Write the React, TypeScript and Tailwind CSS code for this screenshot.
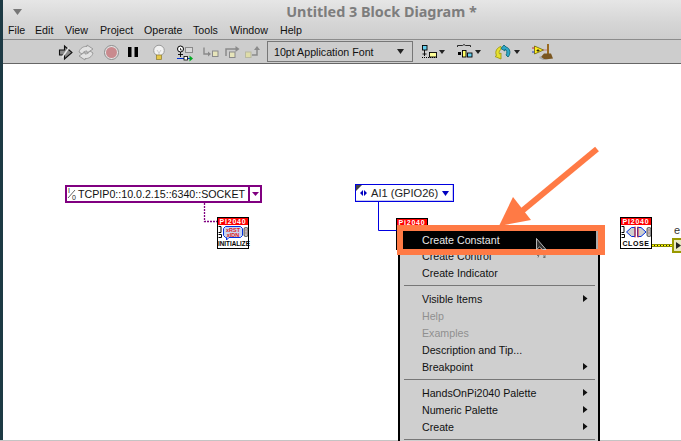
// App.tsx - LabVIEW block diagram window with a context menu and a callout arrow
import React from 'react';

const MENU_BAR = [
  { label: 'File', cls: 'w-[27px]' },
  { label: 'Edit', cls: 'w-[30px]' },
  { label: 'View', cls: 'w-[35px]' },
  { label: 'Project', cls: 'w-[44px]' },
  { label: 'Operate', cls: 'w-[49px]' },
  { label: 'Tools', cls: 'w-[37px]' },
  { label: 'Window', cls: 'w-[50px]' },
  { label: 'Help', cls: 'w-[30px]' },
];

type MenuRow = { label: string; sub?: boolean; off?: boolean } | 'sep';

const MENU: MenuRow[] = [
  { label: 'Create Control' },
  { label: 'Create Indicator' },
  'sep',
  { label: 'Visible Items', sub: true },
  { label: 'Help', off: true },
  { label: 'Examples', off: true },
  { label: 'Description and Tip...' },
  { label: 'Breakpoint', sub: true },
  'sep',
  { label: 'HandsOnPi2040 Palette', sub: true },
  { label: 'Numeric Palette', sub: true },
  { label: 'Create', sub: true },
  'sep',
];

// toolbar drawings use page coordinates through their viewBox
function ToolbarLeft() {
  return (
    <svg width="264" height="23" viewBox="3 40 264 23" className="shrink-0">
      {/* run */}
      <path d="M59.500 50h5v-4l7.500 6.500-7.500 6.500v-4h-5z" fill="#8a8a8a" stroke="#111" strokeWidth="1.100" />
      <path d="M62 57.500L69 47.500" stroke="#e8e8e8" strokeWidth="1.500" />
      {/* run continuously */}
      <path d="M79 52c1-4 5-6 8-5.500v-1.500l6 4-6 4v-2c-2 0-4 1-5 3z" fill="#e2e2e2" stroke="#9a9a9a" />
      <path d="M93 53c-1 4-5 6-8 5.500v1.500l-6-4 6-4v2c2 0 4-1 5-3z" fill="#e2e2e2" stroke="#9a9a9a" />
      {/* abort */}
      <circle cx="111.500" cy="52.500" r="7" fill="#e6e6e6" stroke="#8c8c8c" />
      <circle cx="111.500" cy="52.500" r="5.500" fill="#c98a8e" />
      {/* pause */}
      <rect x="128" y="47" width="3.500" height="10" fill="#000" />
      <rect x="134.500" y="47" width="3.500" height="10" fill="#000" />
      {/* highlight bulb */}
      <circle cx="159" cy="50.500" r="5.300" fill="#f2f2f2" stroke="#9a9a9a" />
      <path d="M157 50l2 3 2-3M159 53v2" fill="none" stroke="#bbb" strokeWidth=".7" />
      <rect x="156.500" y="55" width="5" height="4.500" fill="#e6c84a" stroke="#8a7a30" strokeWidth=".7" />
      {/* retain wire values */}
      <rect x="185.500" y="47.500" width="7" height="5" fill="#d8d8d8" stroke="#8a8a8a" />
      <circle cx="180.500" cy="49" r="3" fill="#fff" stroke="#000" />
      <path d="M180.500 48v2h1.500" fill="none" stroke="#000" strokeWidth=".7" />
      <path d="M180.500 52v5M178 54.500h5" stroke="#000" strokeWidth=".9" />
      <path d="M177 58.500h13" stroke="#0030d0" />
      <rect x="184" y="56.500" width="3.500" height="3.500" fill="#fff" stroke="#000" strokeWidth=".8" />
      <path d="M189.500 55.500l3.500 3-3.500 3z" fill="#00a820" />
      {/* step into */}
      <path d="M204 47.500v6.500h5" fill="none" stroke="#8a8a8a" strokeWidth="1.400" />
      <path d="M208 51.500l3 2.500-3 2.500z" fill="#8a8a8a" />
      <rect x="212.500" y="51" width="5.500" height="5.500" fill="#e6e4ba" stroke="#8a8a8a" />
      {/* step over */}
      <path d="M226 56v-7h10" fill="none" stroke="#8a8a8a" strokeWidth="1.500" />
      <path d="M235.500 46l4 3-4 3z" fill="#8a8a8a" />
      <rect x="229.500" y="52" width="5.500" height="5.500" fill="#e6e4ba" stroke="#8a8a8a" />
      {/* step out */}
      <rect x="245.500" y="52" width="5.500" height="5.500" fill="#dedca8" stroke="#b8b8a0" />
      <path d="M252 55h5v-6" fill="none" stroke="#8a8a8a" strokeWidth="1.500" />
      <path d="M254 50l3-4 3 4z" fill="#8a8a8a" />
    </svg>
  );
}

function ToolbarRight() {
  return (
    <svg width="150" height="23" viewBox="413 40 150 23" className="shrink-0">
      {/* align objects */}
      <rect x="422.500" y="45.500" width="4.500" height="4.500" fill="#66d0f0" stroke="#000" strokeWidth=".9" />
      <path d="M424.500 50v6M422.500 54h4" stroke="#000" strokeWidth=".9" />
      <path d="M422 57.500h15" stroke="#000" strokeDasharray="1 1" />
      <rect x="429.500" y="52.500" width="7" height="4.500" fill="#ffff99" stroke="#000" strokeWidth=".9" />
      <path d="M439 50h6l-3 4z" fill="#222" />
      {/* distribute objects */}
      <path d="M457.500 47v-1.500h5l1.500-1 1.500 1h5v1.500" fill="none" stroke="#000" strokeWidth=".8" />
      <rect x="458" y="52" width="3" height="3" fill="#000" />
      <rect x="462.500" y="50.500" width="3.500" height="6.500" fill="#ffff66" stroke="#000" strokeWidth=".9" />
      <rect x="467.500" y="53" width="4.500" height="4" fill="#66d0f0" stroke="#000" strokeWidth=".9" />
      <path d="M475 50h6l-3 4z" fill="#222" />
      {/* reorder */}
      <path d="M501 46.500c-4 1-6.500 5-4.500 9l-1.500 1 6 2.500 0-6-1.500 1c-1-2 0-4 2-5z" fill="#e6e030" stroke="#a09a10" strokeWidth=".9" />
      <path d="M504 45l-3 3.500 4 2.500v-2c2 1 2.500 4 1 6l2 2c3-3 2.500-9-2-10z" fill="#30a8c8" stroke="#106878" strokeWidth=".9" />
      <path d="M514 50h6l-3 4z" fill="#222" />
      {/* clean up diagram */}
      <path d="M534.500 46l9 4-9 4z" fill="#ffee20" stroke="#6a6000" strokeWidth=".8" />
      <path d="M538 49v3M536.500 50.500h3" stroke="#000" strokeWidth=".7" />
      <path d="M532 48h2.500" stroke="#c03030" />
      <path d="M532 52h2.500" stroke="#2040c0" />
      <path d="M543.500 50h4" stroke="#c03030" strokeDasharray="1 1" />
      <rect x="547" y="44" width="2" height="10" fill="#9a6a20" />
      <path d="M541 57l3-3.500h7l2 5-8 1-3-1z" fill="#7a5620" />
      <path d="M540 56l4 3 4 1-5 0-4-2z" fill="#aaa" />
    </svg>
  );
}

function ViIcon({ tag, label, labelCls, kind }: { tag: string; label?: string; labelCls?: string; kind: 'init' | 'close' | 'none' }) {
  return (
    <div className="relative w-[32px] h-[32px] bg-white border border-black flex flex-col">
      <div className="h-[7px] bg-[#ff0000] text-white text-[7px] leading-[7px] text-center font-bold tracking-[0.8px] [font-family:'Liberation_Sans',sans-serif]">
        {tag}
      </div>
      <div className="flex-1 relative">
        <svg width="30" height="15" viewBox="0 0 30 15" className="absolute left-0 top-0">
          {kind !== 'none' && <path d="M.500 1.500h2.500v6H.500M.500 9.500h3v3H.500" fill="none" stroke="#000" />}
          {kind === 'init' && (
            <>
              <path d="M7.500 1.500h15l2 2v7l-2 2H11l-2.500 2.500v-2.500h-1l-2-2v-7z" fill="#c8d4f0" stroke="#0030e0" />
              <text x="15" y="6.500" textAnchor="middle" fontSize="5.500" fontWeight="700" fill="#e02020">xRST</text>
              <text x="15" y="11.500" textAnchor="middle" fontSize="5.500" fontWeight="700" fill="#e02020">xIDN</text>
            </>
          )}
          {kind === 'close' && (
            <>
              <path d="M5.500 7l5-4.500h3.500v9h-3.500zM25 7l-5-4.500h-3.500v9h3.500z" fill="#cfcfcf" stroke="#0030e0" />
              <path d="M14 1.500v11M17 1.500v11" stroke="#e02020" />
            </>
          )}
          {kind !== 'none' && (
            <>
              <rect x="26" y="2.500" width="4" height="9" rx="1.500" fill="#bcbcbc" stroke="#333" strokeWidth=".8" />
              <path d="M27.500 5h1M27.500 8h1" stroke="#c04040" strokeWidth=".8" />
            </>
          )}
        </svg>
      </div>
      {label && <div className={labelCls}>{label}</div>}
    </div>
  );
}

function ContextMenu() {
  return (
    <div className="absolute left-[398px] top-[231px] w-[202px] h-[215px] bg-[#cfcfcf] border-x-[2.500px] border-black">
      <div className="h-[18px] flex items-center pl-[22px] bg-black text-[#e8e8e8] text-[10.67px] border-r-[2px] border-r-[#aaa]">Create Constant</div>
      <div className="flex flex-col mt-[-2px]">
        {MENU.map((row, i) =>
          row === 'sep' ? (
            <div key={i} className="h-[1px] mx-[3.500px] my-[4px] bg-[#777]" />
          ) : (
            <div
              key={i}
              className={`h-[17px] flex items-center justify-between pl-[22px] pr-[10px] text-[10.67px] ${row.off ? 'text-[#8f8f8f]' : 'text-[#111]'}`}
            >
              <span>{row.label}</span>
              {row.sub && (
                <svg width="5" height="7" viewBox="0 0 5 7">
                  <path d="M0 0l4.500 3.500L0 7z" fill="#111" />
                </svg>
              )}
            </div>
          ),
        )}
      </div>
    </div>
  );
}

export default function App() {
  return (
    <div className="relative w-[681px] h-[441px] overflow-hidden bg-white flex [font-family:'Liberation_Sans',sans-serif]">
      <div className="w-[3px] h-full bg-[#1d3a44] shrink-0" />
      <div className="flex-1 flex flex-col min-w-0">
        {/* title bar */}
        <div className="h-[22px] pt-[2px] bg-gradient-to-b from-[#e6e6e6] to-[#d6d6d6] relative flex items-center justify-center pl-[79px]">
          <svg width="9" height="6" viewBox="0 0 9 6" className="absolute left-[10px] top-[9px]">
            <path d="M0 0h9L4.500 6z" fill="#777" />
          </svg>
          <span className="text-[14.400px] font-bold text-[#7d7d7d] [font-family:'Noto_Sans',sans-serif]">Untitled 3 Block Diagram *</span>
        </div>
        {/* menu bar */}
        <div className="h-[17px] pb-[2px] bg-gradient-to-b from-[#d6d6d6] to-[#cdcdcd] flex items-center pl-[5px] text-[10.67px] text-[#111]">
          {MENU_BAR.map(m => (
            <span key={m.label} className={m.cls}>{m.label}</span>
          ))}
        </div>
        {/* toolbar */}
        <div className="h-[25px] bg-[#cdcdcd] border-y border-t-[#8c8c8c] border-b-[#666] flex items-center">
          <ToolbarLeft />
          <div className="flex items-center justify-between w-[146px] h-[21px] pl-[6px] pr-[8px] border border-[#777] text-[10.67px] text-[#111] shrink-0">
            <span>10pt Application Font</span>
            <svg width="7" height="5" viewBox="0 0 7 5"><path d="M0 0h7L3.500 5z" fill="#222" /></svg>
          </div>
          <ToolbarRight />
        </div>
        <div className="flex-1 bg-white" />
      </div>
      <div className="absolute left-0 right-0 bottom-0 h-px bg-[#c4c4c4]" />

      {/* VISA resource control */}
      <div className="absolute left-[65px] top-[185px] w-[197px] h-[18px] border-2 border-[#800080] flex items-center text-[10.67px] text-[#111] bg-white">
        <svg width="11" height="14" viewBox="0 0 11 14" className="shrink-0">
          <text x="1" y="6" fontSize="7" fill="#222">I</text>
          <text x="5" y="13" fontSize="7" fill="#222">0</text>
          <path d="M1 11L8 3" stroke="#222" strokeWidth=".7" />
        </svg>
        <span className="flex-1 whitespace-nowrap">TCPIP0::10.0.2.15::6340::SOCKET</span>
        <span className="w-[12px] h-full border-l-2 border-[#800080] flex items-center justify-center">
          <svg width="7" height="4" viewBox="0 0 7 4"><path d="M0 0h7L3.500 4z" fill="#800080" /></svg>
        </span>
      </div>
      <div className="absolute left-[217px] top-[217px]">
        <ViIcon tag="PI2040" label="INITIALIZE" kind="init" labelCls="h-[9px] text-[6.300px] leading-[9px] text-center font-bold text-black whitespace-nowrap" />
      </div>

      {/* AI1 ring */}
      <div className="absolute left-[355px] top-[184px] w-[99px] h-[18px] border border-[#0000e0] shadow-[inset_-1px_-1px_0_#c8c8f0] flex items-center text-[11.100px] text-[#222] bg-white">
        <span className="absolute left-0 top-0 w-0 h-0 border-t-[6px] border-r-[6px] border-t-[#444] border-r-transparent" />
        <svg width="15" height="6" viewBox="0 0 15 6" className="shrink-0">
          <path d="M7 0v6L4 3zM8 0v6l3-3z" fill="#0000c0" />
        </svg>
        <span className="flex-1 whitespace-nowrap">AI1 (GPIO26)</span>
        <svg width="7" height="5" viewBox="0 0 7 5" className="mr-[4px]"><path d="M0 0h7L3.500 5z" fill="#0000c0" /></svg>
      </div>
      <div className="absolute left-[396px] top-[218px]"><ViIcon tag="Pi2040" kind="none" /></div>

      {/* close VI and error wire */}
      <div className="absolute left-[620px] top-[217px]">
        <ViIcon tag="PI2040" label="CLOSE" kind="close" labelCls="h-[9px] text-[7px] leading-[9px] text-center font-bold text-black tracking-[0.6px]" />
      </div>
      <div className="absolute left-[652px] top-[244px] w-[20px] h-[3px] border-y border-[#8c8c00] [background-image:repeating-linear-gradient(90deg,#ffff00_0_2px,#222_2px_3px)]" />
      <div className="absolute left-[672px] top-[238px] w-[14px] h-[15px] bg-[#e8e8c0] border-2 border-[#999900] flex items-center pl-[2px]">
        <svg width="5" height="7" viewBox="0 0 5 7"><path d="M0 0l5 3.500-5 3.500z" fill="#222" /></svg>
      </div>
      <span className="absolute left-[674px] top-[222px] text-[11px] text-[#333]">e</span>

      {/* wires */}
      <svg className="absolute left-0 top-0" width="681" height="441" viewBox="0 0 681 441">
        <path d="M204.500 203v18.500h12.500" fill="none" stroke="#800080" strokeWidth="1.300" strokeDasharray="2 1" />
        <path d="M378.500 202v28.500h18" fill="none" stroke="#0000e0" />
      </svg>

      <ContextMenu />

      {/* orange callout */}
      <div className="absolute left-[397px] top-[225px] w-[208px] h-[30px] border-[6px] border-r-[7px] border-[#ff7a45]" />
      <svg className="absolute left-0 top-0 pointer-events-none" width="681" height="441" viewBox="0 0 681 441">
        <path d="M597 149L522 211" stroke="#ff7a45" strokeWidth="6" />
        <path d="M513 197L531 220L499 226z" fill="#ff7a45" />
        <path d="M536.500 238.500v11l3-2.500 3 2.500h3.500z" fill="#333" stroke="#ddd" strokeWidth=".8" />
        <path d="M537 255.500h2l-1 2M543 256h2.500l-2 1.500h2" fill="none" stroke="#555" strokeWidth=".7" />
      </svg>
    </div>
  );
}
